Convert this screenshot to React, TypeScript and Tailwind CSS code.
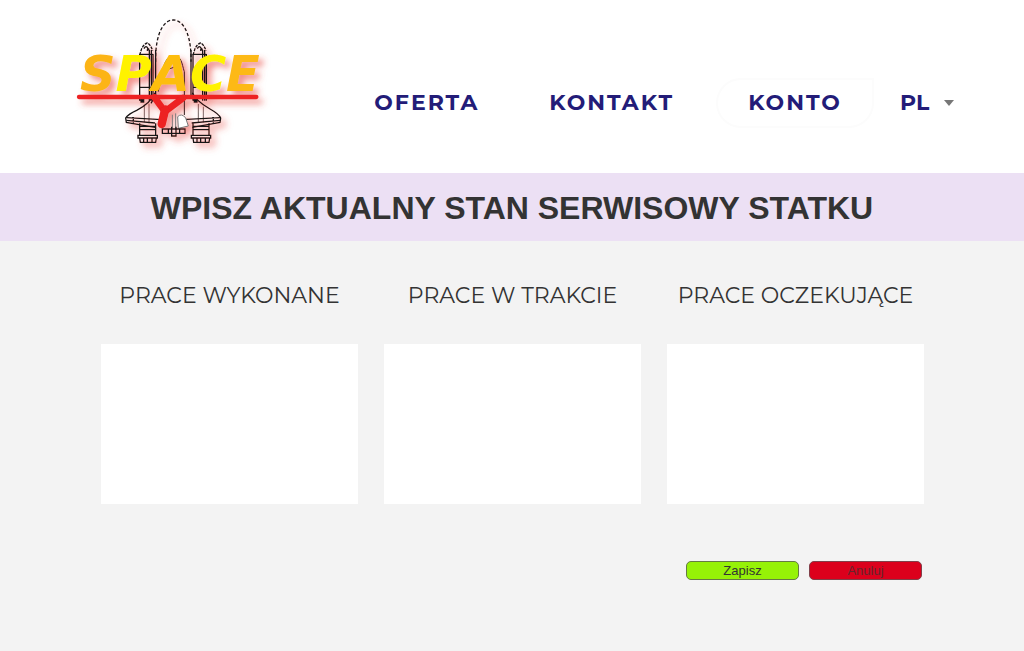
import { ReactNode, useState } from "react";

function Booster({ x }: { x: number }) {
  return (
    <g transform={`translate(${x} 0)`}>
      <path d="M1 122V262M41 122V262M30 110V262M36 110V262" />
      <path d="M1 125L7 106Q14 92 24 89Q34 94 40 112" strokeDasharray="9 3" />
      <path d="M14 106Q20 94 26 106Q20 116 30 106" strokeWidth="4" />
      <path d="M1 123H41M1 222H41M1 260H12" />
      <path d="M5 258H13V266H5Z" fill="#111" />
      <path d="M1 330V367M49 330V367M1 339H49M1 349H49" />
      <path d="M-4 366H54V374H-4ZM1 374L3 387H49L51 374M13 374V387M24 374V387M38 374V387" />
    </g>
  );
}

function Logo() {
  return (
    <svg viewBox="0 0 660 450" role="img" aria-label="Space Y" className="h-[150px] w-[220px]">
      <defs>
        <filter id="glow" x="-10%" y="-10%" width="125%" height="125%">
          <feDropShadow dx="14" dy="14" stdDeviation="9" floodColor="#e8453c" floodOpacity="0.6" />
        </filter>
      </defs>
      <g filter="url(#glow)" transform="translate(0 10)">
        <g fill="none" stroke="#171717" strokeWidth="4">
          <path d="M272 145C270 80 288 20 325 20S380 80 378 145" strokeDasharray="10 6" />
          <path d="M272 110V245L258 270M378 110V245L392 262" />
          <path d="M280 235C290 170 300 127 325 127S350 150 358 175V305M308 168Q327 158 346 164" strokeWidth="3" />
          <Booster x={223} />
          <Booster x={383} />
          <path d="M270 238Q258 268 215 291Q190 302 182 314L184 327L270 342M382 238Q392 262 435 287Q462 302 467 314L465 327L382 342" />
          <path d="M184 313L290 319M184 321L270 329M205 311V328M467 313L350 319M466 321L380 329M445 311V328" />
          <path d="M238 274V327M252 271V330M400 272V329M415 280V327" strokeWidth="2" />
          <path d="M322 304V345M332 300V350M338 310Q350 298 362 314L370 338L340 345Z" stroke="#777" fill="#fff" strokeWidth="3" />
          <path d="M292 347H360V360H292ZM310 347V360M320 340V368H333V340M344 347V360" />
        </g>
        <g fill="none" stroke="#ed2024" strokeLinecap="round" strokeLinejoin="round">
          <path d="M42 251H574" strokeWidth="13" />
          <path d="M268 252L300 295L354 254M303 286L290 332" strokeWidth="20" />
          <path d="M300 290L290 332" strokeWidth="25" />
        </g>
        <text
          x="45"
          y="234"
          fontFamily="DejaVu Sans, sans-serif"
          fontWeight="bold"
          fontStyle="italic"
          fontSize="148"
        >
          <tspan fill="#fcb415">S</tspan>
          <tspan fill="#fff200">P</tspan>
          <tspan fill="#fdbd10">A</tspan>
          <tspan fill="#fff200">C</tspan>
          <tspan fill="#fdb913">E</tspan>
        </text>
      </g>
    </svg>
  );
}

function NavLink({ href, children }: { href: string; children: ReactNode }) {
  return (
    <a href={href} className="tracking-[2px]">
      {children}
    </a>
  );
}

function WorkColumn({ id, title }: { id: string; title: string }) {
  const [value, setValue] = useState("");
  return (
    <div className="flex flex-col gap-8">
      <label htmlFor={id} className="text-center text-[22px] leading-8 font-normal whitespace-nowrap">
        {title}
      </label>
      <textarea
        id={id}
        value={value}
        onChange={(e) => setValue(e.target.value)}
        className="block h-40 w-full resize-none bg-white p-3 text-base outline-none"
      />
    </div>
  );
}

export default function App() {
  return (
    <div className="flex min-h-screen flex-col bg-[#f3f3f3] font-['Montserrat','Inter',sans-serif] text-[#333]">
      <header className="flex items-start bg-white pt-[10px] pr-[70px] pb-[13px] pl-[65px]">
        <Logo />
        <nav className="mt-[68px] ml-auto flex items-center text-[22px] leading-[46px] font-bold text-[#231c78]">
          <div className="mr-[42px] flex gap-[70px]">
            <NavLink href="#oferta">OFERTA</NavLink>
            <NavLink href="#kontakt">KONTAKT</NavLink>
          </div>
          <a
            href="#konto"
            className="mr-[26px] w-[158px] rounded-l-full rounded-br-full border-2 border-[#fcfcfc] text-center tracking-[2px]"
          >
            KONTO
          </a>
          <div className="flex items-center">
            <select aria-label="Język" className="w-11 appearance-none bg-transparent outline-none">
              <option>PL</option>
              <option>EN</option>
            </select>
            <svg viewBox="0 0 10 6" className="h-[6px] w-[10px]" aria-hidden="true">
              <path d="M0 0H10L5 6Z" fill="#777" />
            </svg>
          </div>
        </nav>
      </header>

      <div className="bg-[#ece0f4] pt-[15px] pb-[13px]">
        <h1 className="text-center font-['Liberation_Sans',Arial,sans-serif] text-[32px] leading-10 font-bold">
          WPISZ AKTUALNY STAN SERWISOWY STATKU
        </h1>
      </div>

      <main className="pt-[39px] pr-[100px] pl-[101px]">
        <form onSubmit={(e) => e.preventDefault()}>
          <div className="grid grid-cols-3 gap-[26px]">
            <WorkColumn id="done" title="PRACE WYKONANE" />
            <WorkColumn id="ongoing" title="PRACE W TRAKCIE" />
            <WorkColumn id="pending" title="PRACE OCZEKUJĄCE" />
          </div>
          <div className="mt-[57px] flex justify-end gap-[10px] pr-[2px] font-['Liberation_Sans',Arial,sans-serif] text-[13px] leading-[17px]">
            <button type="submit" className="w-[113px] rounded-[5px] border border-[#667a45] bg-[#96f207]">
              Zapisz
            </button>
            <button type="button" className="w-[113px] rounded-[5px] border border-[#80404a] bg-[#dc001c] text-[#66262c]">
              Anuluj
            </button>
          </div>
        </form>
      </main>
    </div>
  );
}
